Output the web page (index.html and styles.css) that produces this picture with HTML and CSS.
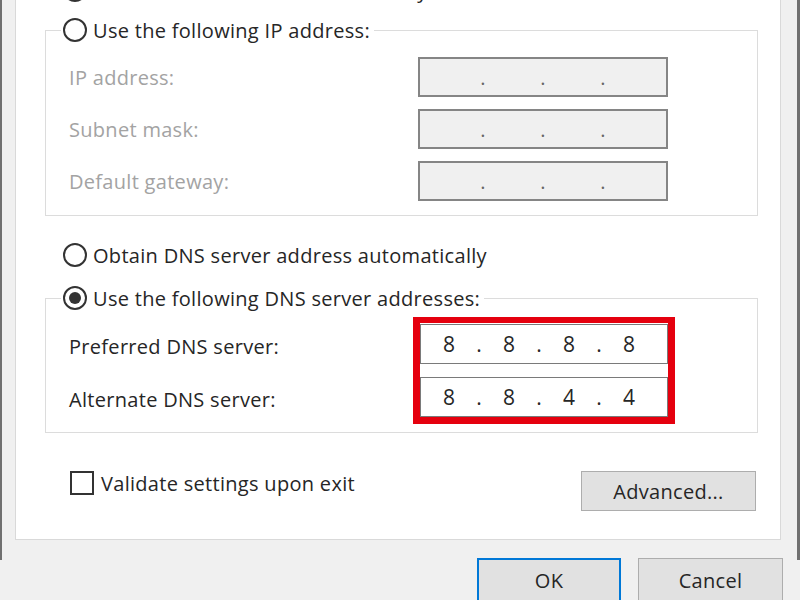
FILE: index.html
```html
<!DOCTYPE html>
<html lang="en">
<head>
  <meta charset="UTF-8">
  <title>Internet Protocol Version 4 (TCP/IPv4) Properties</title>
  <link rel="stylesheet" href="styles.css">
</head>
<body>
  <div class="frame">
    <div class="panel">
      <div class="option"><span class="radio"></span>Obtain an IP address automatically</div>

      <fieldset class="group ip-group">
        <legend class="option"><span class="radio"></span>Use the following IP address:</legend>
        <div class="fields">
          <span class="label">IP address:</span>
          <div class="ip-box disabled"><span class="octet"></span><span class="dot">.</span><span class="octet"></span><span class="dot">.</span><span class="octet"></span><span class="dot">.</span><span class="octet"></span></div>
          <span class="label">Subnet mask:</span>
          <div class="ip-box disabled"><span class="octet"></span><span class="dot">.</span><span class="octet"></span><span class="dot">.</span><span class="octet"></span><span class="dot">.</span><span class="octet"></span></div>
          <span class="label">Default gateway:</span>
          <div class="ip-box disabled"><span class="octet"></span><span class="dot">.</span><span class="octet"></span><span class="dot">.</span><span class="octet"></span><span class="dot">.</span><span class="octet"></span></div>
        </div>
      </fieldset>

      <div class="option dns-auto"><span class="radio"></span>Obtain DNS server address automatically</div>

      <fieldset class="group dns-group">
        <legend class="option"><span class="radio checked"></span>Use the following DNS server addresses:</legend>
        <div class="fields dns-fields">
          <span class="label">Preferred DNS server:</span>
          <div class="highlight">
            <div class="ip-box"><span class="octet">8</span><span class="dot">.</span><span class="octet">8</span><span class="dot">.</span><span class="octet">8</span><span class="dot">.</span><span class="octet">8</span></div>
            <div class="ip-box"><span class="octet">8</span><span class="dot">.</span><span class="octet">8</span><span class="dot">.</span><span class="octet">4</span><span class="dot">.</span><span class="octet">4</span></div>
          </div>
          <span class="label">Alternate DNS server:</span>
        </div>
      </fieldset>

      <div class="footer-row">
        <div class="check"><span class="checkbox"></span>Validate settings upon exit</div>
        <button class="btn advanced">Advanced...</button>
      </div>
    </div>

    <div class="dialog-buttons">
      <button class="btn ok">OK</button>
      <button class="btn cancel">Cancel</button>
    </div>
  </div>
</body>
</html>
```

FILE: styles.css
```css
* {
  box-sizing: border-box;
}

html, body {
  margin: 0;
  height: 100%;
}

body {
  background-color: #f0f0f0;
  font-family: 'Open Sans', sans-serif;
  font-size: 20px;
  letter-spacing: 0.3px;
  color: #262626;
  overflow: hidden;
}

.frame {
  height: 600px;
  border-left: 2px solid #707070;
  border-right: 3px solid #707070;
}

.panel {
  width: 766px;
  height: 580px;
  margin: -40px 0 0 13px;
  padding: 10px 22px 0 29px;
  background-color: #fff;
  border: 1px solid #d9d9d9;
}

.option {
  display: flex;
  align-items: center;
  gap: 6px;
  height: 38px;
  margin-left: 18px;
  white-space: nowrap;
}

.radio {
  flex: none;
  width: 24px;
  height: 24px;
  border: 2px solid #333;
  border-radius: 50%;
  display: flex;
  justify-content: center;
  align-items: center;
}

.radio.checked::after {
  content: '';
  width: 12px;
  height: 12px;
  border-radius: 50%;
  background-color: #333;
}

.group {
  margin: 2px 0 0;
  padding: 0 0 14px 15px;
  border: 1px solid #dcdcdc;
  min-width: 0;
}

.group legend.option {
  margin-left: 0;
  padding: 0 4px 0 2px;
}

.fields {
  display: grid;
  grid-template-columns: 349px 250px;
  row-gap: 12px;
  align-items: center;
  margin: 8px 0 0 8px;
}

.label {
  color: #a3a3a3;
  white-space: nowrap;
}

.ip-box {
  height: 40px;
  display: flex;
  align-items: center;
  padding-left: 9px;
  border: 2px solid #858585;
  background-color: #f0f0f0;
}

.octet {
  width: 48px;
  text-align: center;
}

.dot {
  width: 12px;
  text-align: center;
}

.ip-box.disabled .dot {
  color: #666;
}

.dns-auto {
  margin-top: 20px;
}

.dns-group {
  margin-top: 5px;
  padding-bottom: 8px;
}

.dns-fields {
  grid-template-columns: 344px 262px;
  grid-template-rows: 54px 53px;
  row-gap: 0;
  margin-top: 0;
}

.dns-fields .label {
  color: #262626;
  padding-top: 4px;
}

.highlight {
  grid-column: 2;
  grid-row: 1 / 3;
  display: flex;
  flex-direction: column;
  gap: 13px;
  padding-top: 1px;
  border: 7px solid #e5000e;
  border-top-width: 6px;
}

.highlight .ip-box {
  padding-left: 4px;
  border: 1px solid #7a7a7a;
  background-color: #fff;
  font-size: 21px;
  letter-spacing: 0;
}

.footer-row {
  display: flex;
  justify-content: space-between;
  align-items: flex-start;
  margin-top: 38px;
  padding: 0 2px 0 25px;
}

.check {
  display: flex;
  align-items: center;
  gap: 7px;
  height: 24px;
}

.checkbox {
  flex: none;
  width: 24px;
  height: 24px;
  border: 2px solid #333;
}

.btn {
  font: inherit;
  letter-spacing: inherit;
  color: #262626;
  background-color: #e1e1e1;
  border: 1px solid #adadad;
  padding: 0;
}

.advanced {
  width: 175px;
  height: 40px;
  margin-top: 0;
}

.dialog-buttons {
  display: flex;
  justify-content: flex-end;
  gap: 17px;
  margin-top: 18px;
  padding-right: 14px;
}

.ok {
  width: 144px;
  height: 44px;
  border: 2px solid #0078d7;
}

.cancel {
  width: 145px;
  height: 44px;
}
```
